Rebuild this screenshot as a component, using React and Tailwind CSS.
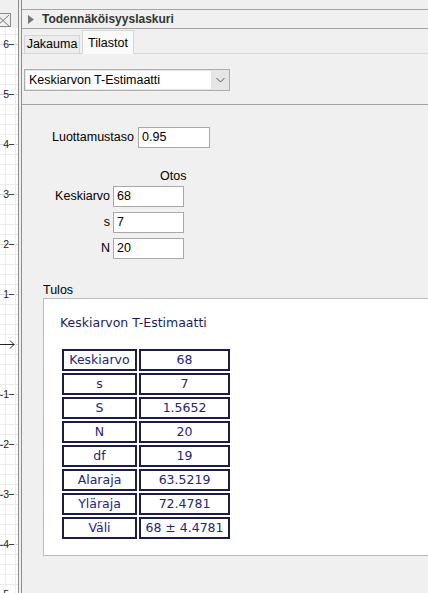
import React from 'react'

const ui = { fontFamily: '"Liberation Sans", Arial, sans-serif' }
const tableFont = { fontFamily: '"DejaVu Sans", Verdana, sans-serif' }

const rows = [
  ['Keskiarvo', '68'],
  ['s', '7'],
  ['S', '1.5652'],
  ['N', '20'],
  ['df', '19'],
  ['Alaraja', '63.5219'],
  ['Yläraja', '72.4781'],
  ['Väli', '68 ± 4.4781'],
]

function GraphStrip() {
  const h = 565
  const minor = []
  for (let y = 316 % 10; y < h; y += 10) minor.push(y)
  const labels = [6, 5, 4, 3, 2, 1, -1, -2, -3, -4, -5]
  return (
    <svg width="18" height={h} className="block bg-white">
      {minor.map((y) => (
        <line
          key={y}
          x1="0"
          x2="18"
          y1={y + 0.5}
          y2={y + 0.5}
          stroke={(316 - y) % 50 === 0 ? '#d6d6d6' : '#ececec'}
          strokeWidth="1"
        />
      ))}
      <line x1="5.5" x2="5.5" y1="0" y2={h} stroke="#ececec" />
      <line x1="15.5" x2="15.5" y1="0" y2={h} stroke="#ececec" />
      {labels.map((n) => {
        const y = 316 - 50 * n
        return (
          <g key={n}>
            <line x1="9" x2="14" y1={y + 0.5} y2={y + 0.5} stroke="#444" />
            <text x="9" y={y + 4} fontSize="10.5" textAnchor="end" fill="#222" style={ui}>
              {n < 0 ? '-' + Math.abs(n) : n}
            </text>
          </g>
        )
      })}
      <line x1="0" x2="14" y1="316.5" y2="316.5" stroke="#222" />
      <path d="M10 312.5 L14 316.5 L10 320.5" fill="none" stroke="#222" />
    </svg>
  )
}

function Field({ value, w }) {
  return (
    <div
      className={`h-[21px] ${w} border border-[#a8a8a8] bg-white pl-[3px] flex items-center text-[12.5px] text-black`}
    >
      {value}
    </div>
  )
}

export default function App() {
  return (
    <div className="w-[428px] h-[593px] flex bg-[#f0f0f0] overflow-hidden text-black" style={ui}>
      {/* graphics view strip */}
      <div className="w-[18px] flex flex-col shrink-0">
        <div className="h-[28px] relative">
          <div className="absolute left-0 top-[13px] w-[11px] h-[14px] border border-l-0 border-[#8a8a8a] bg-[#f0f0f0] overflow-hidden">
            <svg width="11" height="14" className="block">
              <path d="M-3 1 L9 12 M9 1 L-3 12" stroke="#777" strokeWidth="1" />
            </svg>
          </div>
        </div>
        <GraphStrip />
      </div>

      {/* splitter */}
      <div className="w-[4px] shrink-0 border-x border-[#8c8c8c]" />

      {/* probability calculator */}
      <div className="flex-1 flex flex-col min-w-0">
        <div className="h-[9px]" />
        <div className="h-[20px] border-y border-[#a3a3a3] flex items-center">
          <svg width="6" height="9" className="ml-[6px]">
            <path d="M0 0 L6 4.5 L0 9 Z" fill="#777" />
          </svg>
          <span className="ml-[8px] text-[12px] font-bold text-[#333]">Todennäköisyyslaskuri</span>
        </div>

        <div className="h-[25px] flex items-end pl-[2px] border-b border-[#d6d6d6]">
          <div className="h-[18px] w-[56px] border border-b-0 border-[#d6d6d6] bg-[#ececec] flex items-center justify-center text-[12.5px]">
            Jakauma
          </div>
          <div className="h-[24px] w-[52px] ml-[2px] -mb-px border border-b-0 border-[#d6d6d6] bg-[#fafafa] flex items-start justify-center pt-[3px] text-[12.5px]">
            Tilastot
          </div>
        </div>

        <div className="mt-[15px] ml-[2px] w-[206px] h-[22px] border border-[#acacac] bg-[#e6e6e6] flex">
          <div className="flex-1 bg-white flex items-center pl-[3px] text-[12.5px] m-px mr-0">
            Keskiarvon T-Estimaatti
          </div>
          <div className="w-[18px] flex items-center justify-center">
            <svg width="9" height="6">
              <path d="M0.5 1 L4.5 5 L8.5 1" fill="none" stroke="#555" strokeWidth="1" />
            </svg>
          </div>
        </div>

        <div className="mt-[13px] flex-1 border-t border-[#a3a3a3] flex flex-col">
          <div className="mt-[22px] flex items-center pl-[30px]">
            <span className="text-[12.5px]">Luottamustaso</span>
            <div className="ml-[4px]">
              <Field value="0.95" w="w-[72px]" />
            </div>
          </div>

          <div className="mt-[20px] ml-[138px] h-[16px] text-[12.5px] leading-[16px]">Otos</div>

          <div className="mt-[2px] grid grid-cols-[88px_71px] gap-x-[3px] gap-y-[5px] items-center">
            <span className="text-right text-[12.5px]">Keskiarvo</span>
            <Field value="68" w="w-[71px]" />
            <span className="text-right text-[12.5px]">s</span>
            <Field value="7" w="w-[71px]" />
            <span className="text-right text-[12.5px]">N</span>
            <Field value="20" w="w-[71px]" />
          </div>

          <div className="mt-[24px] ml-[21px] h-[15px] text-[12.5px] leading-[15px]">Tulos</div>

          <div className="ml-[21px] w-[420px] h-[258px] border border-[#bcbcbc] bg-white" style={tableFont}>
            <div className="mt-[16px] ml-[16px] text-[12.5px] leading-[16px] text-[#1c1c5e]">
              Keskiarvon T-Estimaatti
            </div>
            <div className="mt-[18px] ml-[18px] grid grid-cols-[75px_91px] gap-[2px] w-fit">
              {rows.map(([k, v]) => (
                <React.Fragment key={k}>
                  <div className="h-[22px] border-2 border-[#1c1c48] flex items-center justify-center text-[12.5px] text-[#25257a]">
                    {k}
                  </div>
                  <div className="h-[22px] border-2 border-[#1c1c48] flex items-center justify-center text-[12.5px] text-[#25257a]">
                    {v}
                  </div>
                </React.Fragment>
              ))}
            </div>
          </div>
        </div>
      </div>
    </div>
  )
}
